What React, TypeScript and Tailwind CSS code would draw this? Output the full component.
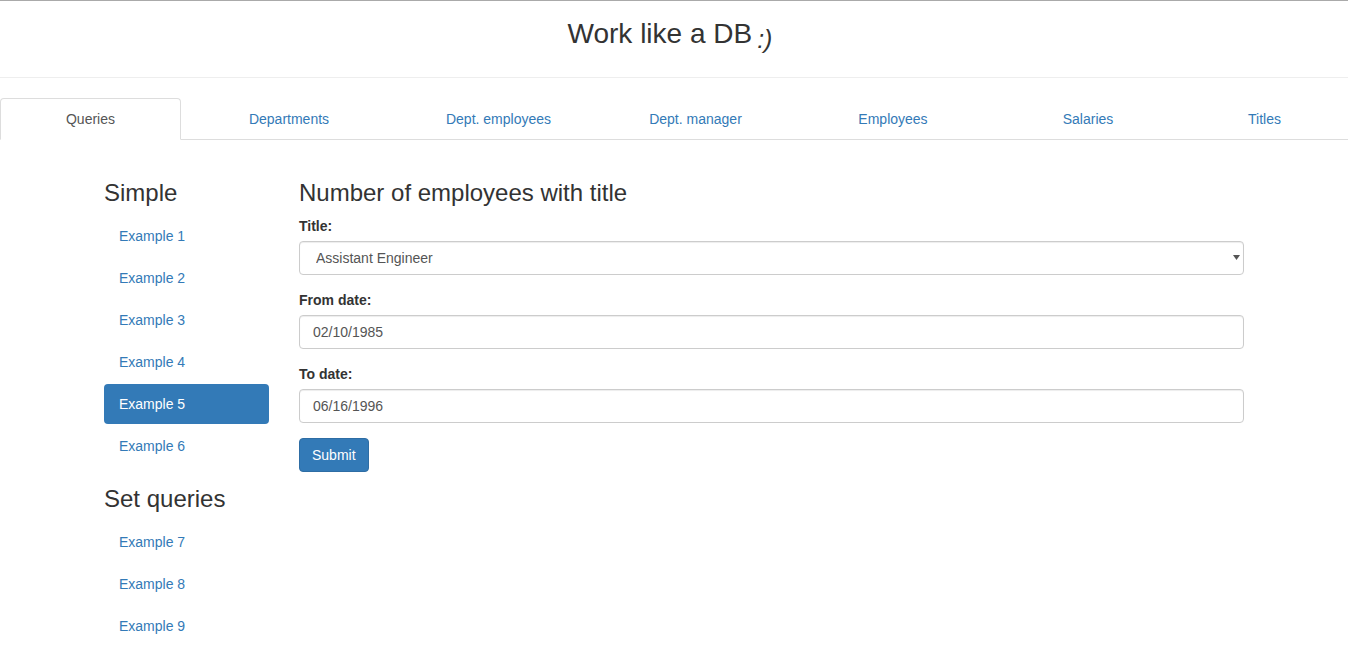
import { useState } from "react";

const tabs = [
  { label: "Queries", w: "181px" },
  { label: "Departments", w: "216px" },
  { label: "Dept. employees", w: "203px" },
  { label: "Dept. manager", w: "191px" },
  { label: "Employees", w: "204px" },
  { label: "Salaries", w: "186px" },
  { label: "Titles", w: "167px" },
];

const groups = [
  { title: "Simple", items: [1, 2, 3, 4, 5, 6] },
  { title: "Set queries", items: [7, 8, 9] },
];

const App = () => {
  const [active, setActive] = useState(5);
  const [title, setTitle] = useState("Assistant Engineer");
  const [from, setFrom] = useState("02/10/1985");
  const [to, setTo] = useState("06/16/1996");

  return (
    <div className="min-h-[646px] bg-white text-[14px] text-[#333] font-['Liberation_Sans',Arial,sans-serif] border-t border-[#aaa]">
      {/* Header */}
      <div className="pt-[12px] pb-[23px] border-b border-[#eee] text-center">
        <h1 className="text-[28px] leading-[41px] h-[41px] text-[#333] pr-[8px]">
          Work like a DB
          <span className="italic inline-block text-[25px] align-[-5px] ml-[5px]">:)</span>
        </h1>
      </div>

      {/* Tabs */}
      <div className="mt-[20px] flex border-b border-[#ddd]">
        {tabs.map((t, i) => (
          <div key={t.label} style={{ width: t.w }} className="-mb-px">
            {i === 0 ? (
              <div className="h-[42px] flex items-center justify-center bg-white border border-[#ddd] border-b-white rounded-t-[4px] text-[#555]">
                {t.label}
              </div>
            ) : (
              <div className="h-[42px] flex items-center justify-center border border-transparent text-[#337ab7] cursor-pointer">
                {t.label}
              </div>
            )}
          </div>
        ))}
      </div>

      {/* Content */}
      <div className="w-[1170px] mx-auto pt-[40px] flex">
        <div className="w-[195px] px-[15px]">
          {groups.map((g, gi) => (
            <div key={g.title} className={gi > 0 ? "mt-[20px]" : ""}>
              <h3 className="text-[24px] leading-[26px] mb-[10px]">{g.title}</h3>
              <ul className="flex flex-col gap-[2px]">
                {g.items.map((n) => (
                  <li key={n}>
                    <a
                      onClick={() => setActive(n)}
                      className={
                        n === active
                          ? "block h-[40px] leading-[40px] px-[15px] rounded-[4px] bg-[#337ab7] text-white cursor-pointer"
                          : "block h-[40px] leading-[40px] px-[15px] rounded-[4px] text-[#337ab7] cursor-pointer"
                      }
                    >
                      Example {n}
                    </a>
                  </li>
                ))}
              </ul>
            </div>
          ))}
        </div>

        <div className="w-[975px] px-[15px]">
          <h3 className="text-[24px] leading-[26px] mb-[10px]">Number of employees with title</h3>

          <div className="mb-[15px]">
            <label className="block font-bold leading-[20px] mb-[5px]">Title:</label>
            <div className="relative">
              <select
                value={title}
                onChange={(e) => setTitle(e.target.value)}
                className="w-full h-[34px] appearance-none pl-[16px] pr-[24px] border border-[#ccc] rounded-[4px] bg-white text-[#555] text-[14px] outline-none shadow-[inset_0_1px_1px_rgba(0,0,0,0.075)]"
              >
                <option>Assistant Engineer</option>
                <option>Engineer</option>
                <option>Senior Engineer</option>
                <option>Staff</option>
                <option>Senior Staff</option>
                <option>Technique Leader</option>
              </select>
              <svg
                className="absolute right-[4px] top-[14px] pointer-events-none"
                width="7"
                height="5"
                viewBox="0 0 7 5"
              >
                <path d="M0 0 H7 L3.5 5 Z" fill="#555" />
              </svg>
            </div>
          </div>

          <div className="mb-[15px]">
            <label className="block font-bold leading-[20px] mb-[5px]">From date:</label>
            <input
              value={from}
              onChange={(e) => setFrom(e.target.value)}
              className="w-full h-[34px] px-[13px] border border-[#ccc] rounded-[4px] text-[#555] text-[14px] outline-none shadow-[inset_0_1px_1px_rgba(0,0,0,0.075)]"
            />
          </div>

          <div className="mb-[15px]">
            <label className="block font-bold leading-[20px] mb-[5px]">To date:</label>
            <input
              value={to}
              onChange={(e) => setTo(e.target.value)}
              className="w-full h-[34px] px-[13px] border border-[#ccc] rounded-[4px] text-[#555] text-[14px] outline-none shadow-[inset_0_1px_1px_rgba(0,0,0,0.075)]"
            />
          </div>

          <button className="h-[34px] px-[12px] bg-[#337ab7] border border-[#2e6da4] rounded-[4px] text-white text-[14px]">
            Submit
          </button>
        </div>
      </div>
    </div>
  );
};

export default App;
